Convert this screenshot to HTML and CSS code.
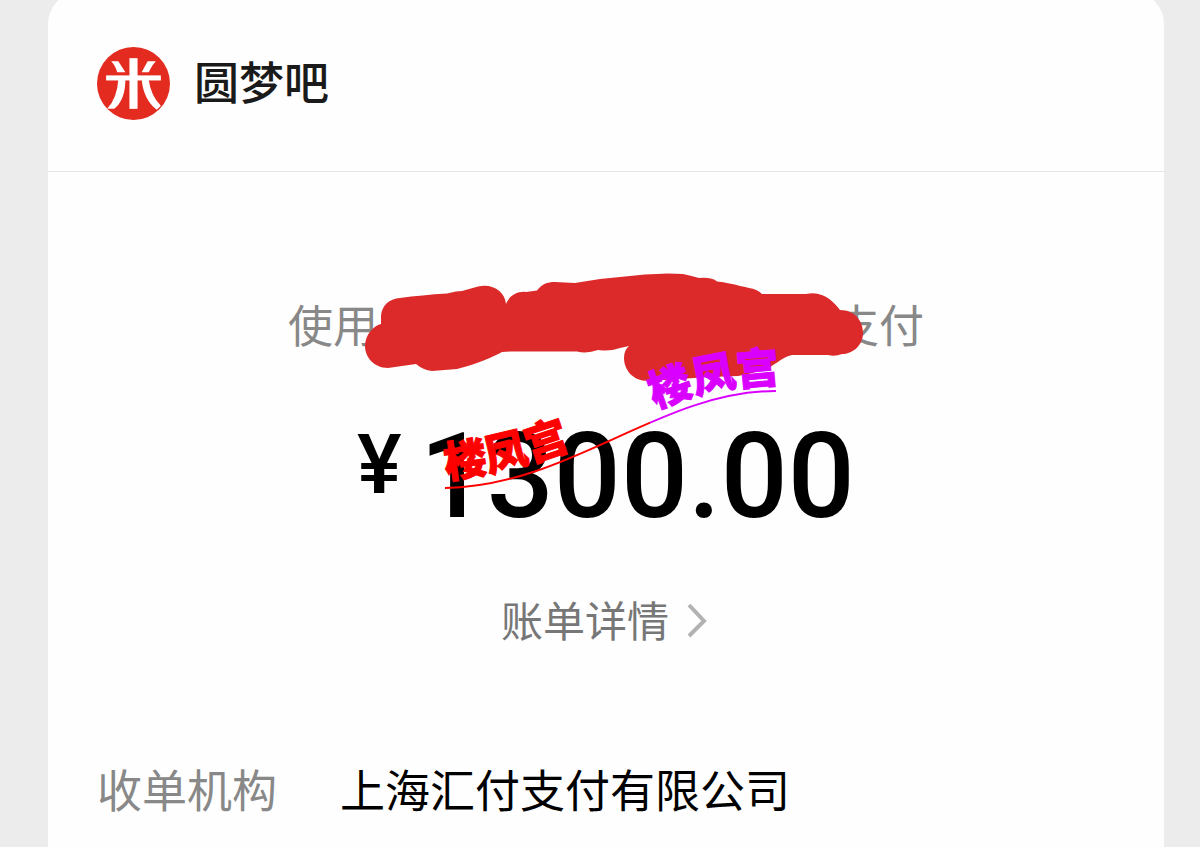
FILE: index.html
```html
<!DOCTYPE html>
<html lang="zh-CN">
<head>
    <meta charset="UTF-8">
    <meta name="viewport" content="width=device-width, initial-scale=1.0">
    <title>圆梦吧</title>
    <link rel="stylesheet" href="styles.css">
</head>
<body>
    <main class="card">
        <header class="merchant">
            <svg class="logo" viewBox="0 0 72 72" aria-hidden="true">
                <circle cx="36" cy="36" r="36" fill="#e42b20"/>
                <g fill="#fff">
                    <rect x="32" y="11" width="8" height="50"/>
                    <rect x="9" y="28" width="54" height="5"/>
                    <path d="M14 14H21L28 25H20Q18 18 14 14Z"/>
                    <path d="M50 14H58Q54 18 51 25H44Z"/>
                    <path d="M21 32H28Q28 52 17 61H10Q20 50 21 32Z"/>
                    <path d="M44 32H51Q53 48 63 58L59 62Q46 52 44 32Z"/>
                </g>
            </svg>
            <h1 class="name">圆梦吧</h1>
        </header>

        <section class="payment">
            <p class="method"><span>使用</span><span>支付</span></p>
            <p class="amount"><span class="currency">¥</span>1300.00</p>
            <a class="bill" href="#">账单详情
                <svg class="arrow" viewBox="0 0 20 38" aria-hidden="true">
                    <path d="M2 5L17 21L2 36"/>
                </svg>
            </a>

            <svg class="overlay" viewBox="346 260 520 270">
                <defs>
                    <linearGradient id="lineColor" gradientUnits="userSpaceOnUse" x1="445" y1="0" x2="855" y2="0">
                        <stop offset="0.5" stop-color="#ff0000"/>
                        <stop offset="0.5" stop-color="#d900ff"/>
                    </linearGradient>
                    <path id="redBase" d="M446 478Q515 472 592 440"/>
                    <path id="purpleBase" d="M655 409Q710 384 795 382"/>
                </defs>
                <path class="scribble" d="M381 324V316C382 305 389 299 400 298Q422 295 447 293.5L456 291.500L462 291L478 286.500C493 283 505 292 506 304C509 296 517 291 526 292L537 290.500C542 284 547 282 555 282L575 283L600 279L645 274.500L668 273.500L683 274Q692 276 699 278Q712 277 717 281.500Q730 283 740 286Q746 287 749 288Q757 289 762 294H806C823 290 834 302 840 310C855 310 863 321 863 333C863 346 852 354 842 354Q835 357 828 355H792C780 358 775 366 763 370Q750 374 738 376L710 377L648 381C632 381 624 369 624 358Q624 350 629 346L620 348Q611 351 603 350.500L598 350Q587 354 577 351.500H510L502 352C493 357 477 364 457 369L432 371Q423 370 416 364L388 368C374 368 365 357 365 346C365 335 373 326 381 324Z"/>
                <path class="line" d="M445 488C570 486 660 391 776 391"/>
                <text class="mark red"><textPath href="#redBase">楼凤宫</textPath></text>
                <text class="mark purple"><textPath href="#purpleBase">楼凤宫</textPath></text>
            </svg>
        </section>

        <dl class="details">
            <dt>收单机构</dt>
            <dd>上海汇付支付有限公司</dd>
        </dl>
    </main>
</body>
</html>
```
FILE: styles.css
```css
* {
    box-sizing: border-box;
}
body {
    margin: 0;
    padding: 0 36px 0 48px;
    background-color: #ececec;
    font-family: "Noto Sans CJK SC", sans-serif;
    color: #000;
}
h1, p, dl, dd {
    margin: 0;
}
.card {
    min-height: calc(100vh + 8px);
    margin-top: -8px;
    background: #fefefe;
    border-radius: 32px 32px 0 0;
}
.merchant {
    display: flex;
    align-items: flex-start;
    gap: 24px;
    height: 180px;
    padding: 55px 49px 0;
    border-bottom: 1px solid #e6e6e6;
}
.logo {
    width: 73px;
    height: 73px;
}
.name {
    font-size: 45px;
    font-weight: 500;
    line-height: 68px;
    color: #1a1a1a;
}
.payment {
    position: relative;
    display: flex;
    flex-direction: column;
    align-items: center;
    padding-top: 122px;
}
.method {
    display: flex;
    justify-content: space-between;
    width: 636px;
    font-size: 45px;
    line-height: 60px;
    color: #888;
}
.amount {
    display: flex;
    align-items: flex-start;
    gap: 18px;
    margin-top: 61px;
    font-family: Roboto, sans-serif;
    font-size: 118px;
    font-weight: 500;
    line-height: 124px;
}
.currency {
    font-size: 84px;
    line-height: 100px;
}
.bill {
    display: flex;
    align-items: center;
    gap: 18px;
    margin-top: 50px;
    padding-right: 4px;
    font-size: 42px;
    line-height: 60px;
    color: #777;
    text-decoration: none;
}
.arrow {
    width: 20px;
    height: 38px;
    fill: none;
    stroke: #b2b2b2;
    stroke-width: 4;
}
.overlay {
    position: absolute;
    top: 88px;
    left: calc(50% - 260px);
    width: 520px;
    height: 270px;
    pointer-events: none;
}
.scribble {
    fill: #dc2a2a;
}
.line {
    fill: none;
    stroke: url(#lineColor);
    stroke-width: 2;
}
.mark {
    font-size: 43px;
    font-weight: 900;
    stroke-width: 1;
}
.red {
    fill: #ff0000;
    stroke: #ff0000;
}
.purple {
    fill: #d900ff;
    stroke: #d900ff;
}
.details {
    display: grid;
    grid-template-columns: 180px 1fr;
    column-gap: 63px;
    padding: 110px 49px 24px;
    font-size: 45px;
    line-height: 60px;
}
.details dt {
    color: #888;
}
```
